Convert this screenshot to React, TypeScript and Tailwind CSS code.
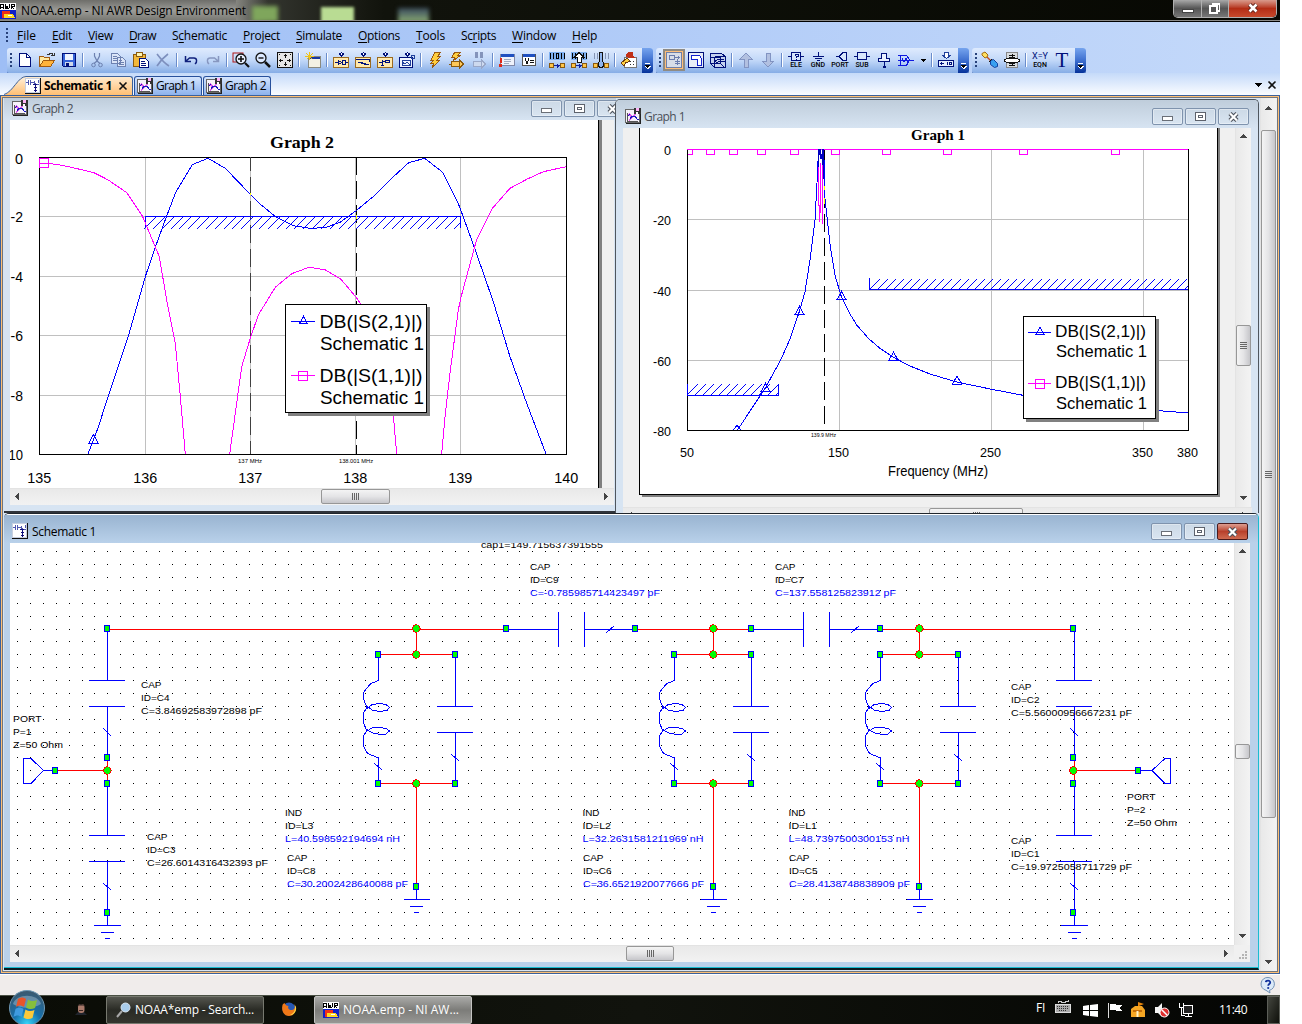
import React, { useLayoutEffect, useRef, useState } from "react";

const UI = "font-['Open_Sans','Noto_Sans',sans-serif]";

/* Text whose tracking is tuned so that it spans exactly `w` pixels. */
function Fit({ w, u = -1, children, className = "" }: { w: number; u?: number; children: string; className?: string }) {
  const ref = useRef<HTMLSpanElement>(null);
  const [ls, setLs] = useState(0);
  useLayoutEffect(() => {
    if (ref.current) setLs((w - ref.current.getBoundingClientRect().width) / children.length);
  }, []);
  return (
    <span ref={ref} className={"inline-block whitespace-pre " + className} style={{ letterSpacing: ls }}>
      {u < 0 ? children : <>{children.slice(0, u)}<span className="underline underline-offset-2">{children[u]}</span>{children.slice(u + 1)}</>}
    </span>
  );
}

function Ico({ children, w = 16, h = 16, smooth = false }: { children: React.ReactNode; w?: number; h?: number; smooth?: boolean }) {
  return (
    <svg width={w} height={h} viewBox={`0 0 ${w} ${h}`} fill="none" shapeRendering={smooth ? "auto" : "crispEdges"} className="shrink-0 overflow-visible">
      {children}
    </svg>
  );
}
const Cell = ({ children, on = false }: { children: React.ReactNode; on?: boolean }) => (
  <div className={on ? "flex h-[22px] w-[22px] shrink-0 items-center justify-center border-2 border-[#8f8b84] bg-[#ffbe78]" : "flex h-[22px] w-[22px] shrink-0 items-center justify-center"}>{children}</div>
);
const Sep = () => (
  <div className="flex h-[22px] w-[6px] shrink-0 items-center justify-center">
    <div className="h-[14px] w-px bg-[#6a8ccb]" />
    <div className="h-[14px] w-px bg-white" />
  </div>
);
const Grip = () => (
  <div className="flex w-[7px] shrink-0 flex-col items-center gap-[2px]">
    {[0, 1, 2, 3].map((i) => <div key={i} className="h-[2px] w-[2px] bg-[#27417a]" />)}
  </div>
);
const Cap = () => (
  <div className="ml-auto flex h-[25px] w-[11px] shrink-0 flex-col items-center justify-end rounded-r-[3px] bg-gradient-to-b from-[#76a4ee] via-[#3e6fcf] to-[#06329a] pb-[3px]">
    <Ico w={7} h={7}><path d="M1 .5h5" stroke="#fff" /><path d="M1 3h6l-3 4z" fill="#fff" /><path d="M0 2h6l-3 3z" fill="#000" /></Ico>
  </div>
);
const barCls = "flex h-[25px] shrink-0 items-center rounded-[3px] bg-gradient-to-b from-[#dfebfe] via-[#c1d7f8] to-[#86ade6] pb-px shadow-[0_1px_0_#3f68b0]";

const N = "#00107a";
/* Small part box shared by the "add ..." icons */
const partBox = (inner: React.ReactNode) => (
  <Ico>
    <path d="M8.500 0.500l2 1.500-2 2-2-2z" fill="#fff" stroke={N} />
    <rect x=".5" y="5.500" width="15" height="10" fill="#ffe9ac" stroke="#9a6a20" />
    {inner}
  </Ico>
);
const bits = (arrow: React.ReactNode, pale = false) => (
  <Ico>
    {!pale && <rect x="0" y="0" width="16" height="8" fill="#7fb0f0" />}
    <path d="M1.500 1v6M4.500 1v6M7.500 1.500h2v5h-2zM12.500 1v6M15.500 1v6" stroke={pale ? "#8795b5" : "#000"} />
    <rect x=".5" y="11.500" width="4" height="4" fill="#ffc64a" stroke="#8a5a10" />
    <rect x="11.500" y="11.500" width="4" height="4" fill="#ffc64a" stroke="#8a5a10" />
    <path d="M5 13.500h6M8.500 11.500v4M9.500 12.500v2" stroke="#1020a0" />
    {arrow}
  </Ico>
);
const bolt = "M8 0h6l-3 4h3l-4 4h3L5 16l2-5H4l3-3H4z";

function AwrIcon() {
  return (
    <Ico>
      <rect width="16" height="16" fill="#fff" />
      <path d="M0 6l1-5h2l1 5M1 4h2M5 1v4l1 1 1-3 1 3 1-1V1M11 6V1h3v2h-3l3 3" stroke="#000" />
      <rect y="7" width="16" height="9" fill="#1020c8" />
      <rect x="2" y="8" width="8" height="7" fill="#f03018" />
      <path d="M4 15v-4h9l2 4z" fill="#ffd820" />
      <path d="M8 12h4" stroke="#fff" />
    </Ico>
  );
}
function SchIcon() {
  return (
    <Ico>
      <rect x=".5" y=".5" width="14" height="14" fill="#fff" stroke="#c8d0e0" />
      <path d="M0 15.500h15.500V0" stroke="#111" />
      <path d="M1 4.500h2M3.500 2v5M5.500 2v5M6 4.500h3M9.500 3v3h4M13.500 2v3M10.500 5v2" stroke="#5058b0" />
      <path d="M10.500 6v8M8 6.500h4M9 9.500h3M9 12.500h3" stroke="#10107c" />
    </Ico>
  );
}
function GraphIcon() {
  return (
    <Ico>
      <rect x=".5" y="1.500" width="14" height="13" fill="#f6f2fa" stroke="#666" />
      <path d="M1 15.500h14.500V4" stroke="#222" />
      <path d="M2.500 5v8h10" stroke="#555" />
      <path d="M4 12l8-7M4 6l3 3" stroke="#e060e8" strokeWidth="1.500" />
      <path d="M3 8l2-2M5 11l2-3h3l2 3h2" stroke="#1818c0" />
      <rect x="9" y="0" width="7" height="6" fill="#333" />
      <rect x="11" y="0" width="3" height="3" fill="#ffb4f7" /><rect x="11" y="4" width="2" height="2" fill="#fff" />
    </Ico>
  );
}

function Toolbars() {
  return (
    <div className="flex h-[25px] gap-[3px] pl-[7px]">
      <div className={barCls + " w-[646px]"}>
        <Grip />
        <Cell><Ico><path d="M2.500 1.500h7l4 4v9h-11z" fill="#fff" stroke={N} /><path d="M9.500 1.500v4h4" stroke={N} /></Ico></Cell>
        <Cell><Ico><path d="M.5 14.500v-10h4l1 1h5v3" fill="#ffe9a0" stroke="#a05a10" /><path d="M.5 14.500l4-6h11l-4 6z" fill="#ffb43c" stroke="#a05a10" /><path d="M8 2.500h2l1-1h2l1 2M12 3.500h3M15 1v3" stroke="#333" /></Ico></Cell>
        <Cell><Ico><path d="M1.500 1.500h13v13h-12l-1-1z" fill="#3563d8" stroke={N} /><rect x="4" y="2" width="8" height="6" fill="#eef4ff" /><rect x="4" y="10" width="8" height="4" fill="#cfd8ea" /><rect x="5" y="11" width="3" height="3" fill={N} /></Ico></Cell>
        <Sep />
        <Cell><Ico smooth><path d="M5.500 1v3l2.500 5M10.500 1v3L8 9l-3 2.500M8 9l3 2.500" stroke="#6d81b0" strokeWidth="1.200" /><circle cx="4.500" cy="13" r="1.800" stroke="#6d81b0" /><circle cx="11.500" cy="13" r="1.800" stroke="#6d81b0" /></Ico></Cell>
        <Cell><Ico><path d="M.5 1.500h6l3 3v7h-9zM6.500 5.500h5l3 3v6h-8z" fill="#dbe5f8" stroke="#6d81b0" /><path d="M2 4.500h4M2 6.500h4M2 8.500h4M8 8.500h3M8 10.500h5M8 12.500h5" stroke="#6d81b0" /></Ico></Cell>
        <Cell><Ico><rect x=".5" y="2.500" width="12" height="12" rx="1" fill="#f2b83a" stroke="#8a5a10" /><rect x="3.500" y=".5" width="6" height="4" fill="#fff4b0" stroke="#8a5a10" /><path d="M6.500 6.500h6l3 3v6h-9z" fill="#fff" stroke={N} /><path d="M8 9.500h4M8 11.500h5M8 13.500h5" stroke={N} /></Ico></Cell>
        <Cell><Ico smooth><path d="M2 2c3 4 7 9 12 12M13 2C9 5 5 9 2 14" stroke="#7d8fbd" strokeWidth="1.600" /></Ico></Cell>
        <Sep />
        <Cell><Ico smooth><path d="M2.500 4v5.500H8M3 9l3.500-3h4.500c3 0 3.500 4 1 6" stroke="#10207c" strokeWidth="1.500" /></Ico></Cell>
        <Cell><Ico smooth><path d="M13.500 4v5.500H8M13 9L9.500 6H5C2 6 1.500 10 4 12" stroke="#8797c0" strokeWidth="1.500" /></Ico></Cell>
        <Sep />
        <Cell><Ico smooth><rect x="0" y="1" width="10" height="9" stroke="#b01818" /><circle cx="8" cy="7" r="5" fill="#e8f0ff" stroke="#111" strokeWidth="1.300" /><path d="M5 7h6M8 4v6" stroke="#111" strokeWidth="1.600" /><path d="M12 11l4 4" stroke="#111" strokeWidth="2.200" /></Ico></Cell>
        <Cell><Ico smooth><circle cx="6" cy="6" r="5" fill="#dce9ff" stroke="#111" strokeWidth="1.300" /><path d="M3.500 6h5" stroke="#111" strokeWidth="1.400" /><path d="M10 10l5 5" stroke="#111" strokeWidth="2.500" /></Ico></Cell>
        <Cell><Ico><rect x=".5" y=".5" width="15" height="15" fill="#e6e6e6" stroke="#111" /><path d="M8.500 2v4M8.500 10v4M2 8.500h4M10 8.500h4M7 3.500h3M7 12.500h3M3.500 7v3M12.500 7v3M2 2.500h1M13 2.500h1M2 13.500h1M13 13.500h1" stroke="#111" /></Ico></Cell>
        <Sep />
        <Cell><Ico><rect x="3.500" y="4.500" width="12" height="11" fill="#f3f1e4" stroke="#8a8a80" /><rect x="4" y="5" width="11" height="2" fill="#1838a0" /><path d="M4.500 0v8M0 4.500h9M1.500 1.500l6 6M7.500 1.500l-6 6" stroke="#f0c418" /></Ico></Cell>
        <Sep />
        <Cell>{partBox(<path d="M2 10.500h3M5.500 8.500v4l3-2zM9.500 8.500h3v4h-3zM13 10.500h2" stroke={N} />)}</Cell>
        <Cell>{partBox(<path d="M1 7.500h13v2M3 10.500h4l3 2h4M6 11.500h5" stroke={N} />)}</Cell>
        <Cell>{partBox(<path d="M2 10.500h3M5.500 8v5M4 13.500h3M6 9.500h2M8.500 8.500h4v2h-4z" stroke={N} />)}</Cell>
        <Cell><Ico><path d="M8.500 0.500l2 1.500-2 2-2-2z" fill="#fff" stroke={N} /><rect x=".5" y="5.500" width="13" height="10" fill="#eef4ff" stroke={N} /><path d="M3 8.500h8v5H3zM3 10.500l3 1 2-1 3 2M12.500 3.500h3v3h-3z" stroke="#20409c" /></Ico></Cell>
        <Sep />
        <Cell><Ico><path d={bolt} fill="#ffcf40" stroke="#9a5a10" /></Ico></Cell>
        <Cell><Ico><path d="M6 0h6L9 3h3L4 9l2-4H3z" fill="#ffcf40" stroke="#9a5a10" /><path d="M2.500 9.500h8v5h-8zM10.500 8v8l4-4z" fill="#ffc858" stroke="#8a5a10" /><path d="M0 12.500h2" stroke="#8a5a10" /></Ico></Cell>
        <Cell><Ico><path d="M4 0h3v6H4zM9 0h3v6H9z" fill="#8494bb" /><path d="M2.500 9.500h8v5h-8zM10.500 8v8l4-4z" fill="#cdd9ee" stroke="#9aa8c8" /></Ico></Cell>
        <Sep />
        <Cell><Ico><rect x="1.500" y="2.500" width="14" height="11" fill="#eef2fb" stroke="#8088a8" /><rect x="2" y="2" width="13" height="3" fill="#2050c0" /><path d="M5 7.500h7M5 9.500h7M5 11.500h5" stroke="#a0aac0" /><path d="M1 6h2v5H1zM0 12h3v3H0z" fill="#e02818" /></Ico></Cell>
        <Cell><Ico><rect x="1.500" y="2.500" width="13" height="11" fill="#fff" stroke="#555" /><rect x="2" y="2" width="12" height="3" fill="#2050c0" /><path d="M4 6.500l2 5 2-5M9 8.500h4M9 10.500h4" stroke="#111" /></Ico></Cell>
        <Sep />
        <Cell>{bits(null)}</Cell>
        <Cell>{bits(<path d="M8 .5l5 5h-3v5H6v-5H3z" fill="#fff" stroke="#111" />)}</Cell>
        <Cell>{bits(<path d="M6.500 0h3v9l1 2v3l-1 1h-3l-1-1v-3l1-2z" fill="#8fb4ee" stroke="#111" />, true)}</Cell>
        <Sep />
        <Cell><Ico><rect x="3.500" y="5.500" width="12" height="10" fill="#fff" stroke="#777" /><path d="M5 5V2l3-2h4v3l2 3H8z" fill="#c03018" /><path d="M0 11l6-5 3 3-2 1h-2l-2 4z" fill="#ffcf40" stroke="#6a3a10" /><path d="M9 9.500h1M12 9.500h1M9 12.500h1M12 12.500h1" stroke="#333" /></Ico></Cell>
        <Cap />
      </div>
      <div className={barCls + " w-[313px]"}>
        <Grip />
        <Cell on><Ico><rect x=".5" y=".5" width="15" height="15" fill="#d8dde8" stroke="#7080a8" /><path d="M3 3.500h5v4H3zM8 5.500h6M12.500 4v3M11.500 7v6M9 9.500h5M9 11.500h5" stroke="#6a7cae" /></Ico></Cell>
        <Cell><Ico><rect x=".5" y=".5" width="15" height="15" fill="#e9edf6" stroke={N} /><path d="M3.500 3.500h8l2 3v7h-4v-6h-6z" fill="#fff" stroke="#1020d0" /></Ico></Cell>
        <Cell><Ico><path d="M.5 1.500h11l4 3v11h-11l-4-4z" fill="#c4d2ee" stroke={N} /><path d="M.5 5.500h10v6M5 4.500h10M4.500 5v10M.5 11.500h10l4 4M4 10l5-3h5M4 12l6-3h5" stroke={N} /></Ico></Cell>
        <Sep />
        <Cell><Ico><path d="M8 1l6 6h-4v8H6V7H2z" fill="#b2c0e0" stroke="#8294c2" /></Ico></Cell>
        <Cell><Ico><path d="M8 15l6-6h-4V1H6v8H2z" fill="#b2c0e0" stroke="#8294c2" /></Ico></Cell>
        <Sep />
        <Lab t="ELE"><path d="M0 4.500h3M13 4.500h3" stroke={N} /><rect x="3.500" y=".5" width="9" height="8" fill="#d7e6fb" stroke={N} /><path d="M7 3.500v-1h3v2H8v1M8 7.500h1" stroke={N} /></Lab>
        <Lab t="GND"><path d="M8.500 0v4M3 4.500h11M5 6.500h7M7 8.500h3" stroke={N} /></Lab>
        <Lab t="PORT"><path d="M4 4.500h3M7 4.500l4-4h3v8h-3z" stroke={N} fill="#d7e6fb" /></Lab>
        <Lab t="SUB"><path d="M0 4.500h3M13 4.500h3" stroke={N} /><rect x="3.500" y=".5" width="9" height="7" fill="#d7e6fb" stroke={N} /></Lab>
        <Cell><Ico><path d="M5.500 1.500h5v5h3v3h-11v-3h3zM8.500 10v6" fill="#eaf2ff" stroke={N} /><path d="M7 14h3v2H7z" fill={N} /></Ico></Cell>
        <Cell><Ico><path d="M2.500 3.500h6l3 4-3 6h-6zM0 3.500h3M0 8.500h16M0 13.500h3M4 6l2 4 2-4 2 4" stroke="#1018e0" /></Ico></Cell>
        <div className="flex w-[9px] justify-end"><Ico w={5} h={3}><path d="M0 0h5L2.500 3z" fill="#000" /></Ico></div>
        <div className="ml-[3px] flex"><Sep /></div>
        <Cell><Ico><path d="M6.500.5h4v3h2l-4 3-4-3h2z" fill="#fff" stroke="#20409c" /><rect x=".5" y="8.500" width="15" height="6" fill="#e6efff" stroke={N} /><path d="M2 11.500h4M3.500 10v3M9.500 10v3M11.500 10.500h2v2h-2z" stroke={N} /></Ico></Cell>
        <Cap />
      </div>
      <div className={barCls + " w-[114px]"}>
        <Grip />
        <Cell><Ico smooth><path d="M0 1.500l3-1.500 3 3-1 2-2 1-3-3z" fill="#ffe060" stroke="#a06a10" /><path d="M5 5l4 4" stroke="#c05020" strokeWidth="1.500" /><path d="M8.500 8.500l3-1 4 4v3l-3 1-4-3z" fill="#38a0f0" stroke="#1040a0" /><path d="M10 7l-3 3" stroke="#111" /></Ico></Cell>
        <Cell><Ico><rect x="2.500" y=".5" width="11" height="15" fill="#d8dce0" stroke="#888" /><path d="M5 3.500h6M5 5.500h6M5 11.500h6M5 13.500h6M8.500 2v12" stroke="#111" /><path d="M.5 7.500l3-1h9l3 1v2l-3 1h-9l-3-1z" fill="#fff" stroke="#111" /></Ico></Cell>
        <Sep />
        <div className="flex h-[22px] w-[22px] flex-col items-center justify-center font-['Roboto',sans-serif] text-[9px] leading-[9px] text-[#00107a]"><span>X=Y</span><span className="text-[7px] font-medium leading-[8px] text-black">EQN</span></div>
        <div className="flex h-[22px] w-[22px] items-center justify-center font-['Liberation_Serif',serif] text-[21px] leading-[22px] text-[#00107a]">T</div>
        <Cap />
      </div>
    </div>
  );
}
function Lab({ t, children }: { t: string; children: React.ReactNode }) {
  return (
    <div className="flex h-[22px] w-[22px] shrink-0 flex-col items-center justify-center gap-px">
      <Ico h={9}>{children}</Ico>
      <span className="font-['Roboto',sans-serif] text-[7px] font-medium leading-[7px] text-black">{t}</span>
    </div>
  );
}

/* Caption buttons of a document window */
function WinButtons({ active = false }: { active?: boolean }) {
  const b = "flex h-[17px] w-[31px] shrink-0 items-center justify-center rounded-[2px] border border-[#7f93ad] bg-gradient-to-b from-[#ccd9e6] to-[#d9e5f1] shadow-[inset_0_0_0_1px_rgba(255,255,255,0.35)]";
  const r = "flex h-[17px] w-[31px] shrink-0 items-center justify-center rounded-[2px] border border-[#4a1a1c] bg-gradient-to-b from-[#dd9d90] via-[#b8402c] to-[#cf6a50]";
  return (
    <div className="flex gap-[2px]">
      <div className={b}><Ico w={11} h={9}><rect x=".5" y="4.500" width="10" height="4" fill="#fff" stroke="#6a6f77" /></Ico></div>
      <div className={b}><Ico w={11} h={9}><rect x=".5" y=".5" width="10" height="8" stroke="#5d626c" fill="#fff" /><rect x="3.500" y="3.500" width="4" height="2" stroke="#5d626c" /></Ico></div>
      <div className={active ? r : b}><Ico w={11} h={10} smooth><path d="M2 1.500l7 7M9 1.500l-7 7" stroke="#4b515b" strokeWidth="4.400" /><path d="M2 1.500l7 7M9 1.500l-7 7" stroke="#fff" strokeWidth="2.200" /></Ico></div>
    </div>
  );
}

/* Scroll bar: pre is the track length before the thumb, len the thumb length */
function VScroll({ pre, len, grip = true, className }: { pre: number; len: number; grip?: boolean; className: string }) {
  return (
    <div className={"flex w-[16px] shrink-0 flex-col items-center border-l border-[#e3e3e3] bg-gradient-to-r from-[#e9e9e9] to-[#f3f3f3] py-[6px] " + className}>
      <Ico w={7} h={5}><path d="M0 4h7L3.500 0z" fill="#444" /></Ico>
      <div style={{ height: pre }} className="shrink-0" />
      <div style={{ height: len }} className="flex w-[15px] shrink-0 flex-col items-center justify-center gap-px rounded-[2px] border border-[#979797] bg-gradient-to-r from-[#f4f4f4] via-[#e4e4e6] to-[#c6c6ca]">
        {grip && [0, 1, 2, 3].map((i) => <div key={i} className="h-px w-[7px] bg-[#666]" />)}
      </div>
      <div className="grow" />
      <Ico w={7} h={5}><path d="M0 0h7L3.500 4z" fill="#444" /></Ico>
    </div>
  );
}
function HScroll({ pre, len, className }: { pre: number; len: number; className: string }) {
  return (
    <div className={"flex shrink-0 items-center border-t border-[#e3e3e3] bg-gradient-to-b from-[#e9e9e9] to-[#f2f2f2] px-[5px] pb-px " + className}>
      <Ico w={5} h={7}><path d="M4 0v7L0 3.500z" fill="#444" /></Ico>
      <div style={{ width: pre }} className="shrink-0" />
      <div style={{ width: len }} className="flex h-[15px] shrink-0 items-center justify-center gap-px rounded-[2px] border border-[#979797] bg-gradient-to-b from-[#f4f4f4] via-[#e4e4e6] to-[#c6c6ca]">
        {[0, 1, 2, 3].map((i) => <div key={i} className="h-[7px] w-px bg-[#666]" />)}
      </div>
      <div className="grow" />
      <Ico w={5} h={7}><path d="M0 0v7l4-3.500z" fill="#444" /></Ico>
    </div>
  );
}

const A = "'Liberation Sans', Arial, sans-serif";
const S = "'Liberation Serif', 'Times New Roman', serif";
function T({ x, y, s, w, f = A, c = "#000", a = "start", b = false, children }: { x: number; y: number; s: number; w?: number; f?: string; c?: string; a?: "start" | "middle" | "end"; b?: boolean; children: string }) {
  return (
    <text x={x} y={y} fontSize={s} fontFamily={f} fill={c} textAnchor={a} fontWeight={b ? 700 : 400} textLength={w} lengthAdjust="spacingAndGlyphs" stroke="none">
      {children}
    </text>
  );
}
const B = "#0000ff";
const M = "#ff00ff";
const tri = (x: number, y: number, r = 4.5) => `M${x - r} ${y + r - 1}L${x} ${y - r}L${x + r} ${y + r - 1}Z`;
/* 45 degree strokes drawn pixel by pixel, rising to the right from the row yb */
const hatch = (x0: number, x1: number, yb: number, h: number, step: number) => {
  let d = "";
  for (let x = x0; x < x1 - 1; x += step)
    for (let k = 0; k < h && Math.floor(x) + k < x1; k++) d += `M${Math.floor(x) + k} ${yb - k + 0.5}h1`;
  return d;
};

function Chart2() {
  return (
    <svg width="604" height="368" viewBox="10 120 604 368" fill="none" className="block shrink-0 bg-[#f0f0f0]">
      <rect x="10" y="120" width="588" height="368" fill="#fff" />
      <rect x="598" y="120" width="1" height="368" fill="#000" /><rect x="599" y="120" width="3" height="368" fill="#808080" />
      <g shapeRendering="crispEdges">
        <path d="M145.500 158v296M250.500 158v296M355.500 158v296M460.500 158v296M40 216.500h526M40 276.500h526M40 335.500h526M40 395.500h526" stroke="#c0c0c0" />
        <rect x="39.500" y="157.500" width="527" height="297" stroke="#000" />
        <path d="M250.500 157v297" stroke="#404040" strokeDasharray="18 6" strokeDashoffset="4" />
        <path d="M356.500 157v297" stroke="#000" strokeDasharray="18 6" />
        <path d="M145.500 228V216.500H461" stroke={B} /><path d="M460.500 216V228" stroke={B} />
        <path d={hatch(144.500, 461, 228, 12, 8.85)} stroke={B} />
        <path d="M88 454L98 428L108.300 396L127.700 338.300L145.500 276L155 248L166.500 216.500L175.700 192.300L192.300 164.600L208 158.300L225.300 168.300L250.300 194.300L258.500 202.700L275.500 216.700L293.500 225.700L310 228.300L325 227.700L340 222.300L355.700 211L374 196L391.700 178.300L408.700 162.700L424.700 158.300L442.700 172.300L459.300 206L474.300 247.300L493.300 301.700L510 356.700L526.700 403.300L546 454" stroke={B} />
        <path d="M39.500 163.500H47L56.700 164.300L70 167L94 172.700L108.300 180L126.700 192.700L142.700 216.700L159.300 256.700L166.700 300L175.300 343.300L180 393L185.300 454M229.700 454L236.700 403L241.700 366.700L250.300 338.300L258.300 315L275.300 287.300L291.700 273.700L309 267.300L325 269.700L340.700 279L355.700 296.700L360.700 304L375 345L393.300 415L396.700 454M441.700 454L445 416.700L450 373L458.300 310L460.700 298.300L476.700 239.300L492.700 208L510 188.300L527.300 179L543.300 171.700L566 166.700" stroke={M} />
        <rect x="39.500" y="158.500" width="9" height="9" stroke={M} />
        <path d={tri(93.500, 439.500, 4.800)} stroke={B} />
        <path d="M250.500 193v2M356.500 215v4" stroke="#ff0" />
        <rect x="288" y="307" width="142" height="109" fill="#808080" />
        <rect x="285.500" y="304.500" width="141" height="108" fill="#fff" stroke="#000" />
        <path d={"M291 321.500h24" + tri(303.500, 320.500, 4)} stroke={B} />
        <path d="M291 375.500h24M298.500 371.500h9v9h-9z" stroke={M} />
      </g>
      <T x={270} y={148} s={17} w={64} f={S} b>Graph 2</T>
      <T x={23} y={163.500} s={14} w={8} a="end">0</T>
      <T x={23} y={222} s={14} a="end">-2</T>
      <T x={23} y={282} s={14} a="end">-4</T>
      <T x={23} y={341} s={14} a="end">-6</T>
      <T x={23} y={401} s={14} a="end">-8</T>
      <T x={23} y={460} s={14} w={14.500} a="end">10</T>
      {[[39.5, "135"], [145.5, "136"], [250.5, "137"], [355.5, "138"], [460.5, "139"], [566.5, "140"]].map(([x, t]) => (
        <T key={t} x={(x as number) - 0.3} y={483} s={14.300} w={24} a="middle">{t as string}</T>
      ))}
      <T x={238} y={463} s={5} w={24}>137 MHz</T>
      <T x={339} y={463} s={5} w={34}>138.001 MHz</T>
      <T x={319.500} y={327.700} s={18} w={103}>DB(|S(2,1)|)</T>
      <T x={320} y={349.500} s={18} w={104}>Schematic 1</T>
      <T x={319.500} y={381.700} s={18} w={103}>DB(|S(1,1)|)</T>
      <T x={320} y={403.500} s={18} w={104}>Schematic 1</T>
    </svg>
  );
}

function Chart1() {
  return (
    <svg width="612" height="379" viewBox="623 128 612 379" fill="none" className="block shrink-0 bg-[#f0f0f0]">
      <g shapeRendering="crispEdges">
        <path d="M642 128H1220V497H642z" fill="#808080" />
        <rect x="639.500" y="120.500" width="578" height="374" fill="#fff" stroke="#000" />
        <path d="M839.500 150v280M991.500 150v280M1143.500 150v280M688 219.500h500M688 290.500h500M688 360.500h500" stroke="#c0c0c0" />
        <path d="M687.500 149V430.500H1188.500V149" stroke="#000" />
        <path d="M824.500 150v280" stroke="#000" strokeDasharray="18 6" strokeDashoffset="8" />
        <path d="M687.500 384V395.500H778.500V384M869.500 278V289.500H1188" stroke={B} />
        <path d={hatch(687, 778, 394, 11, 8.1) + hatch(870, 1188, 288, 10, 8.1)} stroke={B} />
        <path d="M737.500 430L765 388.500L780.700 360L790 339L799.300 311.700L805 291.700L810 260L815 220L817 183L818.500 150M824.500 160V195L827 217L830.500 248L835 275L839.300 290L841.700 297.700L850 314L856.700 325L869.300 339.300L880 348.300L893.300 357.300L910 366L930 374L956.700 382L991.700 389.300L1023 395.300L1090 404.500L1159.300 410.700L1188 413" stroke={B} />
        <path d="M687 149.500H1188" stroke={M} />
        {[691, 710.5, 733.5, 761, 794.5, 835.5, 886, 947, 1023, 1115].map((x, i) => (
          <path key={x} d={i === 0 ? "M688 154.500h4.500v-5" : `M${Math.floor(x) - 4 + 0.5} 149.500v5h8v-5z`} stroke={M} />
        ))}
        <path d="M818.500 167v39M819.500 205v17M822.500 164v60" stroke={M} />
        <path d="M820.500 163v50" stroke={M} />
        <path d="M818.500 149v18M819.500 149v6M821.500 154v5M820.500 149v10M822.500 149v16M823.500 149v30" stroke="#0000c0" />
        <path d="M824.500 186v4M824.500 198v6" stroke="#ff0" />
        <path d={[tri(799.5, 311), tri(765.5, 388), tri(841.5, 296), tri(893.5, 356.5), tri(957, 380.5)].join("") + "M733 430l4-4.500 4 4.500"} stroke={B} />
        <rect x="1026" y="319" width="133" height="103" fill="#808080" />
        <rect x="1023.500" y="316.500" width="132" height="102" fill="#fff" stroke="#000" />
        <path d={"M1028 332.500h23" + tri(1040, 331.500, 4)} stroke={B} />
        <path d="M1028 383.500h23M1035.500 379.500h9v9h-9z" stroke={M} />
      </g>
      <T x={911} y={140} s={15.500} w={54} f={S} b>Graph 1</T>
      <T x={671} y={155} s={13} w={7} a="end">0</T>
      {[[225, "-20"], [295.500, "-40"], [365.500, "-60"], [435.500, "-80"]].map(([y, t]) => (
        <T key={t} x={671} y={y as number} s={13.500} w={18} a="end">{t as string}</T>
      ))}
      <T x={680} y={457} s={13.500} w={14}>50</T>
      {[[838.5, "150"], [990.5, "250"], [1142.500, "350"], [1187.500, "380"]].map(([x, t]) => (
        <T key={t} x={x as number} y={457} s={13.500} w={21} a="middle">{t as string}</T>
      ))}
      <T x={888} y={476} s={14} w={100}>Frequency (MHz)</T>
      <T x={811} y={437} s={5} w={25}>139.9 MHz</T>
      <T x={1055} y={337} s={16.500} w={91}>DB(|S(2,1)|)</T>
      <T x={1056} y={357} s={16.500} w={91}>Schematic 1</T>
      <T x={1055} y={388} s={16.500} w={91}>DB(|S(1,1)|)</T>
      <T x={1056} y={409} s={16.500} w={91}>Schematic 1</T>
    </svg>
  );
}

const dots = (() => {
  let d = "";
  for (let j = 0; j <= 30; j++)
    for (let i = 0; i <= 94; i++) d += `M${Math.floor(17.7 + i * 12.878)} ${Math.floor(551.85 + j * 12.878) + 0.5}h1`;
  return d;
})();
/* Resonators: centre, inductor and capacitor columns */
const tanks: [number, number, number][] = [[416, 378, 455], [713, 674, 751], [919, 880, 958]];
const sq: [number, number][] = [
  [107, 628], [107, 757], [107, 783], [107, 912], [55, 770], [506, 628], [635, 628], [751, 628], [880, 628],
  [1073, 628], [1073, 757], [1073, 783], [1073, 912], [1138, 770],
  ...tanks.flatMap(([c, l, r]) => [[l, 654], [r, 654], [l, 783], [r, 783], [c, 886]] as [number, number][]),
];
const jn: [number, number][] = [[107, 770], [1073, 770], ...tanks.flatMap(([c]) => [[c, 628], [c, 654], [c, 783]] as [number, number][])];

function Tank({ at: [c, l, r] }: { at: [number, number, number] }) {
  return (
    <g stroke={B}>
      <path transform={`translate(${l - 378} 0)`} d="M378.500 657V680.500L371 683.500L366 689L363 694V698L366 705L367.500 708L372 704.500L380 703.500L386 704.500L389.500 707.500L387 710.500L380 711.500L373 710.500L367.500 706.500L364 712L363 717V722L367 731L372 728L380 727.500L386 728.500L389.500 731L386 734L380 734.500L373 733L367.500 730L364 735L363 740V745L367.500 753.500L378.500 758V780M374 763l8 7" />
      <path d={`M${r + 0.5} 657V706.500M${r - 18} 706.500h36M${r - 18} 732.500h36M${r + 0.5} 732V780M${r - 4} 754l8 7`} />
      <path d={`M${l} 654.500H${r}M${l} 783.500H${r}M${c + 0.5} 628v26M${c + 0.5} 783v101`} stroke="#f00" />
      <path d={`M${c + 0.5} 888v11M${c - 12} 899.500h26M${c - 6} 906.500h13M${c - 2} 912.500h5`} />
    </g>
  );
}
function VCaps({ x }: { x: number }) {
  return (
    <path stroke={B} d={`M${x + 0.5} 629V680.500M${x - 18} 680.500h36M${x - 18} 706.500h36M${x + 0.5} 706V757M${x - 4} 728l8 8M${x + 0.5} 783V835.500M${x - 18} 835.500h36M${x - 18} 861.500h36M${x + 0.5} 861V925M${x - 4} 883l8 7M${x - 13} 925.500h27M${x - 6} 932.500h13M${x - 2} 938.500h5`} />
  );
}
function Label({ x, y, lines, w, c = "#000" }: { x: number; y: number; lines: string[]; w: number; c?: string }) {
  const hw = lines[0] === "PORT" ? 28.500 : lines[0] === "IND" ? 17 : 20.500;
  const iw = lines[0] === "PORT" ? 18.500 : 28.500;
  return (
    <>
      <T x={x} y={y} s={9.500} w={hw}>{lines[0]}</T>
      <T x={x} y={y + 13} s={9.500} w={iw}>{lines[1]}</T>
      <T x={x} y={y + 26} s={9.500} w={w} c={c}>{lines[2]}</T>
    </>
  );
}
function Schematic() {
  return (
    <svg width="1224" height="402" viewBox="10 543 1224 402" fill="none" className="block shrink-0 bg-white">
      <g shapeRendering="crispEdges">
        <path d={dots} stroke="#000" />
        <path d="M107 629.500H506M635 629.500H751M880 629.500H1073M58 770.500H107M107.500 757v26M1074.500 757v26M1074 770.500h62" stroke="#f00" />
        <VCaps x={107} /><VCaps x={1074} />
        {tanks.map((t) => <Tank key={t[0]} at={t} />)}
        <path d="M506 629.500H558.500M558.500 612v35M584.500 612v35M584 629.500H635M606 633l8-7M751 629.500H803.500M803.500 612v35M829.500 612v35M829 629.500H880M851 633l8-7" stroke={B} />
        <path d="M23.500 758.500H31L43.500 770.500L31 783.500H23.500ZM43 770.500h10M1170.500 758.500H1165L1152 770.500L1165 783.500H1170.500ZM1140 770.500h12" stroke={B} />
        {jn.map(([x, y], i) => <circle key={i} cx={x + 0.4} cy={y + 0.5} r="3.700" fill="#0f0" stroke="#f00" />)}
        {sq.map(([x, y], i) => <rect key={i} x={x - 2.500} y={y - 2.500} width="5" height="6" fill="#0f0" stroke={B} />)}
      </g>
      <T x={481} y={548} s={9.500} w={122}>cap1=149.715637391555</T>
      <Label x={141} y={688} w={121} lines={["CAP", "ID=C4", "C=3.84692583972898 pF"]} />
      <Label x={13} y={722} w={50} lines={["PORT", "P=1", "Z=50 Ohm"]} />
      <Label x={147} y={840} w={121} lines={["CAP", "ID=C3", "C=26.6014316432393 pF"]} />
      <Label x={285} y={816} w={115} c={B} lines={["IND", "ID=L3", "L=40.598592194694 nH"]} />
      <Label x={287} y={861} w={121} c={B} lines={["CAP", "ID=C8", "C=30.2002428640088 pF"]} />
      <Label x={530} y={570} w={130} c={B} lines={["CAP", "ID=C9", "C=-0.785985714423497 pF"]} />
      <Label x={775} y={570} w={121} c={B} lines={["CAP", "ID=C7", "C=137.558125823912 pF"]} />
      <Label x={582.500} y={816} w={121} c={B} lines={["IND", "ID=L2", "L=32.2631581211969 nH"]} />
      <Label x={583} y={861} w={121} c={B} lines={["CAP", "ID=C6", "C=36.6521920077666 pF"]} />
      <Label x={788.500} y={816} w={121} c={B} lines={["IND", "ID=L1", "L=48.7397500300153 nH"]} />
      <Label x={789} y={861} w={121} c={B} lines={["CAP", "ID=C5", "C=28.4138748838909 pF"]} />
      <Label x={1011} y={690} w={121} lines={["CAP", "ID=C2", "C=5.56000956667231 pF"]} />
      <Label x={1011} y={844} w={121} lines={["CAP", "ID=C1", "C=19.9725058711729 pF"]} />
      <Label x={1127} y={800} w={50} lines={["PORT", "P=2", "Z=50 Ohm"]} />
    </svg>
  );
}

const menu: [string, number, number][] = [
  ["File", 19, 0], ["Edit", 20, 0], ["View", 25, 0], ["Draw", 27, 0], ["Schematic", 55, 1], ["Project", 37, 0],
  ["Simulate", 46, 0], ["Options", 42, 0], ["Tools", 29, 0], ["Scripts", 35, 2], ["Window", 44, 0], ["Help", 25, 0],
];

export default function App() {
  return (
    <div className={"h-[1024px] w-[1302px] overflow-hidden bg-white " + UI}>
      <div className="flex h-[1024px] w-[1280px] flex-col overflow-hidden text-[12px] leading-4 text-black">
        {/* Title bar */}
        <div className="relative flex h-[22px] shrink-0 overflow-hidden border-b border-black bg-gradient-to-r from-[#8f8f8c] via-[#11130c] via-30% to-[#070803]">
          <div className="absolute left-0 top-0 h-[21px] w-[236px] bg-gradient-to-b from-[#6e6e6a] via-[#9c9c98] to-[#75756f]" />
          <div className="absolute left-[236px] top-0 h-[21px] w-[32px] bg-gradient-to-r from-[#85857f] to-transparent" />
          <div className="absolute left-[252px] top-[6px] h-[16px] w-[26px] bg-[#7fa65c] blur-[2px]" />
          <div className="absolute left-[321px] top-[7px] h-[16px] w-[33px] bg-[#b9dc93] blur-[1.5px]" />
          <div className="absolute left-[398px] top-[8px] h-[15px] w-[31px] bg-gradient-to-b from-[#3a4a5c] to-[#8fb070] blur-[2px]" />
          <div className="absolute bottom-0 left-0 h-px w-full bg-[#8a8a88]" />
          <div className="relative flex w-full items-start">
            <div className="mt-[3px]"><AwrIcon /></div>
            <div className="ml-[5px] mt-[3px]"><Fit w={225}>NOAA.emp - NI AWR Design Environment</Fit></div>
            <div className="ml-auto mr-[3px] flex h-[18px] overflow-hidden rounded-b-[5px] border border-t-0 border-[#b0b0b0]">
              <div className="flex w-[28px] items-center justify-center border-r border-[#b0b0b0] bg-gradient-to-b from-[#a9a9a9] via-[#555] to-[#777]"><Ico w={12} h={8}><rect x=".5" y="4.500" width="11" height="3" fill="#fff" stroke="#444" /></Ico></div>
              <div className="flex w-[27px] items-center justify-center border-r border-[#b0b0b0] bg-gradient-to-b from-[#a9a9a9] via-[#555] to-[#777]"><Ico w={12} h={12}><rect x="3.500" y="1" width="7" height="7" stroke="#fff" strokeWidth="1.500" /><rect x="1" y="3" width="7" height="7" fill="#555" stroke="#fff" strokeWidth="2" /></Ico></div>
              <div className="flex w-[47px] items-center justify-center bg-gradient-to-b from-[#d89a8c] via-[#b32d15] to-[#c7492c] pb-px"><Ico w={12} h={10} smooth><path d="M2.500 1.500l7 7M9.500 1.500l-7 7" stroke="#5a2018" strokeWidth="4.400" /><path d="M2.500 1.500l7 7M9.500 1.500l-7 7" stroke="#fff" strokeWidth="2.600" /></Ico></div>
            </div>
          </div>
        </div>

        {/* Menu, tool bars */}
        <div className="h-[51px] shrink-0 bg-gradient-to-r from-[#9ebef5] to-[#c4d9fa]">
          <div className="flex h-[26px] items-center">
            <div className="ml-[3px] mr-[4px]"><Grip /></div>
            <div className="ml-[3px] mt-px flex gap-4">
              {menu.map(([t, w, u]) => <Fit key={t} w={w} u={u}>{t}</Fit>)}
            </div>
          </div>
          <Toolbars />
        </div>

        {/* Document tabs */}
        <div className="flex h-[22px] shrink-0 items-end bg-gradient-to-b from-[#c5daf9] to-[#fafcff]">
          <svg width="26" height="19" viewBox="0 0 26 19" className="ml-[1px] shrink-0">
            <defs><linearGradient id="tabo" x2="0" y2="1"><stop stopColor="#fff3e0" /><stop offset="1" stopColor="#ffbf73" /></linearGradient></defs>
            <path d="M3 19C12 16 17 0 25 0h1v19z" fill="url(#tabo)" />
            <path d="M3 18.500C12 16 17 .5 25 .5h1" fill="none" stroke="#3b619c" />
          </svg>
          <div className="flex h-[19px] w-[106px] shrink-0 items-center rounded-tr-[3px] border-r border-t border-[#3b619c] bg-gradient-to-b from-[#ffeacb] to-[#ffbf73]">
            <div className="-ml-[2px]"><SchIcon /></div>
            <div className="ml-[3px]"><Fit w={68} className="font-bold">Schematic 1</Fit></div>
            <div className="ml-[7px]"><Ico w={8} h={8} smooth><path d="M.5.5l7 7M7.500.5l-7 7" stroke="#111" strokeWidth="1.600" /></Ico></div>
          </div>
          {[["Graph 1", 40, 0], ["Graph 2", 41, 1]].map(([t, w]) => (
            <div key={t as string} className="ml-px flex h-[19px] w-[68px] shrink-0 items-center gap-[3px] rounded-t-[3px] border border-b-0 border-[#27509c] bg-gradient-to-b from-[#d5e5fd] to-[#8db2ec] pl-[2px]">
              <GraphIcon /><Fit w={w as number}>{t as string}</Fit>
            </div>
          ))}
          <div className="mb-[6px] ml-auto mr-[4px] flex items-center gap-[6px]">
            <Ico w={8} h={4}><path d="M0 0h8L4 4z" fill="#000" /></Ico>
            <Ico w={8} h={8} smooth><path d="M.5.5l7 7M7.500.5l-7 7" stroke="#111" strokeWidth="1.600" /></Ico>
          </div>
        </div>

        {/* Work area */}
        <div className="h-[879px] shrink-0 border border-[#3b619c] bg-[#ffbf73] p-px">
          <div className="flex h-full w-full overflow-hidden border border-[#72767c] bg-[#d7e4f2]">
            <div className="relative w-[1257px] shrink-0 overflow-hidden">
              {/* Graph 2 */}
              <div className="absolute left-px top-0 flex h-[415px] w-[612px] flex-col overflow-hidden bg-[#d7e4f2]">
                <div className="flex h-[22px] shrink-0 items-start bg-gradient-to-b from-[#bfcddb] to-[#d7e4f2] pl-[8px]">
                  <div className="mt-[2px]"><GraphIcon /></div>
                  <div className="ml-[4px] mt-[3px] text-[#4b5058]"><Fit w={41}>Graph 2</Fit></div>
                  <div className="ml-[458px] mt-[2px]"><WinButtons /></div>
                </div>
                <div className="ml-[6px] w-[604px]">
                  <Chart2 />
                  <HScroll pre={301} len={69} className="h-[17px] w-[604px]" />
                </div>
                <div className="mt-auto h-[2px] bg-[#30343a]" />
              </div>
              {/* Graph 1 */}
              <div className="absolute left-[612px] top-px flex h-[414px] w-[644px] flex-col overflow-hidden rounded-t-[5px] border-l border-r border-t border-[#4f565e] bg-[#d7e4f2]">
                <div className="flex h-[28px] shrink-0 items-start bg-gradient-to-b from-[#bfcddb] to-[#d7e4f2] pl-[9px] pr-[9px]">
                  <div className="mt-[8px]"><GraphIcon /></div>
                  <div className="ml-[3px] mt-[9px] text-[#4b5058]"><Fit w={41}>Graph 1</Fit></div>
                  <div className="ml-auto mt-[8px]"><WinButtons /></div>
                </div>
                <div className="ml-[7px] flex w-[629px]">
                  <Chart1 />
                  <VScroll pre={186} len={41} className="h-[379px]" />
                </div>
                <div className="ml-[7px] w-[629px]"><HScroll pre={296} len={94} className="h-[17px]" /></div>
              </div>
              {/* Schematic */}
              <div className="absolute left-px top-[415px] flex h-[457px] w-[1255px] flex-col overflow-hidden rounded-t-[5px] border-b-2 border-r border-t border-b-[#0b1a20] border-r-[#19bcd0] border-t-[#20262c] bg-[#b9d1ea]">
                <div className="flex h-[29px] shrink-0 items-start border-t border-white bg-gradient-to-b from-[#99b4d1] to-[#b9d1ea] pl-[8px] pr-[10px]">
                  <div className="mt-[8px]"><SchIcon /></div>
                  <div className="ml-[4px] mt-[9px]"><Fit w={64}>Schematic 1</Fit></div>
                  <div className="ml-auto mt-[8px]"><WinButtons active /></div>
                </div>
                <div className="ml-[6px] flex w-[1240px]">
                  <Schematic />
                  <VScroll pre={190} len={15} grip={false} className="h-[402px]" />
                </div>
                <div className="ml-[6px] flex w-[1240px]">
                  <HScroll pre={606} len={48} className="h-[17px] w-[1224px]" />
                  <div className="flex h-[17px] w-[16px] items-end justify-end bg-[#f0f0f0] p-[3px]"><Ico w={8} h={8}><path d="M6 1h2M3 4h2M6 4h2M0 7h2M3 7h2M6 7h2" stroke="#b4b4b4" strokeWidth="2" /></Ico></div>
                </div>
                <div className="mt-auto h-px bg-[#19bcd0]" />
              </div>
            </div>
            <VScroll pre={19} len={688} className="h-[873px] pt-[8px]" />
            <div className="grow bg-[#f0f0f0]" />
          </div>
        </div>

        {/* Status bar */}
        <div className="flex h-[21px] shrink-0 items-center justify-end border-t border-[#fff] bg-[#f0eceb] pr-[4px]">
          <Ico smooth><path d="M8 .5a6.500 6.500 0 0 1 1.500 12.800L10 16l-4-2.700A6.500 6.500 0 0 1 8 .5z" fill="#dceaf8" stroke="#6f8fb4" /><path d="M5.800 5.200C6 3 10.400 3 10.200 5.500c0 1.500-2 1.600-2 3.200" stroke="#10309c" strokeWidth="1.800" /><circle cx="8.200" cy="11" r="1.100" fill="#10309c" /></Ico>
        </div>

        {/* Task bar */}
        <div className="relative flex h-[29px] shrink-0 items-center border-t border-[#4a5044] bg-gradient-to-r from-[#0a0c06] via-[#11130d] to-[#050604] text-white">
          <svg width="36" height="36" viewBox="0 0 36 36" className="absolute -top-[6px] left-[9px]">
            <defs><radialGradient id="orb" cx=".5" cy=".95" r=".9"><stop stopColor="#35d4f8" /><stop offset=".45" stopColor="#1670ac" /><stop offset="1" stopColor="#3a5a72" /></radialGradient></defs>
            <circle cx="18" cy="18" r="17.500" fill="url(#orb)" stroke="#6e98b4" />
            <path d="M4 14C7 3 29 3 32 14C24 19 12 19 4 14z" fill="#fff" opacity=".28" />
            <path d="M9 9c3-2 5-2 8 0l-2 8c-3-2-5-2-8 0z" fill="#e8552a" />
            <path d="M19 9.500c3 2 6 2 9 .5l-2 8c-3 1.500-6 1.500-9-.5z" fill="#86bf3c" />
            <path d="M6.500 19c3-2 5-2 8 0l-2 8c-3-2-5-2-8 0z" fill="#3f9be0" />
            <path d="M16.500 19.500c3 2 6 2 9 .5l-2 8c-3 1.500-6 1.500-9-.5z" fill="#fcc93a" />
          </svg>
          <div className="ml-[73px] mt-[-2px]"><Ico smooth><path d="M2 14l3-3h6l3 3z" fill="#20242c" /><rect x="5" y="3" width="6.500" height="9" rx="3" fill="#a8796a" /><path d="M4.500 6c0-4 7-4 7 0l-1-1.500H5.500z" fill="#2c2422" /><path d="M6 9.500h4" stroke="#3c2824" /></Ico></div>
          <div className="ml-[17px] flex h-[28px] w-[158px] items-center rounded-[2px] border border-[#77796f] bg-gradient-to-b from-[#55564f] via-[#2a2b25] to-[#34352e] pb-px pl-[9px]">
            <Ico smooth><path d="M1 15l5-6" stroke="#a8a8a8" strokeWidth="2" /><circle cx="9.500" cy="5.500" r="4.500" fill="#a9cdec" stroke="#d8e4ee" /></Ico>
            <div className="ml-[3px]"><Fit w={119}>NOAA*emp - Search...</Fit></div>
          </div>
          <div className="ml-[17px] mt-[-2px]"><Ico smooth><circle cx="8" cy="8" r="6.500" fill="#2858b4" /><path d="M1.500 4C0 10 3 15 8 15s8-5 6.500-11c-.5 4-2 5-4 5-3 0-4-2-3-4-2 0-3-1-4-3-.7.500-1.500 1-2 2z" fill="#f07818" /><path d="M13 3c2 4 1 9-4 11 3 .5 7-3 6-8z" fill="#fcd040" /></Ico></div>
          <div className="ml-[17px] flex h-[28px] w-[158px] items-center rounded-[2px] border border-[#c4c4c2] bg-gradient-to-b from-[#aaaaa8] via-[#7c7c79] to-[#979794] pb-px pl-[8px]">
            <AwrIcon />
            <div className="ml-[4px]"><Fit w={116}>NOAA.emp - NI AW...</Fit></div>
          </div>
          <div className="ml-auto flex items-center">
            <div className="-mt-[5px] mr-[10px] text-[12px]"><Fit w={9}>FI</Fit></div>
            <div className="-mt-[4px] mr-[12px]"><Ico><path d="M3.500 3V1.500h3v1h4v-1h3V0" stroke="#ccc" /><rect x=".5" y="4.500" width="15" height="8" fill="#aaa" stroke="#ddd" /><path d="M2 6.500h12M2 8.500h12M4 10.500h8" stroke="#333" strokeDasharray="1 1" /></Ico></div>
            <div className="mr-[9px]"><Ico w={15} h={15} smooth><path d="M0 3l6-1v5H0zM7 2l8-1v6H7zM0 8h6v5l-6-1zM7 8h8v6l-8-1z" fill="#fff" /></Ico></div>
            <div className="mr-[7px]"><Ico><path d="M1.500 1v15" stroke="#ddd" /><path d="M3 2c3-1 4 1 6 0v6c-2 1-3-1-6 0zM9 3h6l-2 3 2 3c-2 0-3 1-6 0z" fill="#fff" /></Ico></div>
            <div className="mr-[8px]"><Ico smooth><path d="M8 5V0l6 2-5 2" fill="#e8860c" /><path d="M1 7l4-3h7l3 4v7H1z" fill="#f5a623" /><path d="M3 8h9v2H3z" fill="#c56d08" /><path d="M7.500 9v6" stroke="#fff3c8" strokeWidth="2" /></Ico></div>
            <div className="mr-[8px]"><Ico smooth><path d="M1 5h3l4-4v14l-4-4H1z" fill="#f4f4f4" /><circle cx="10.500" cy="10.500" r="4.500" fill="#e03030" stroke="#fff" /><path d="M7.500 7.500l6 6" stroke="#fff" strokeWidth="1.500" /></Ico></div>
            <div className="mr-[25px]"><Ico><rect x="5.500" y="3.500" width="9" height="8" fill="#222" stroke="#fff" /><path d="M7 14.500h7M10.500 12v3M1.500 1v4h4v-4M3.500 5v8h3" stroke="#fff" /></Ico></div>
            <Fit w={28}>11:40</Fit>
            <div className="ml-[20px] h-[28px] w-[13px] border border-[#5c5e58] bg-gradient-to-br from-[#44463f] to-[#10110c]" />
          </div>
        </div>
      </div>
    </div>
  );
}
